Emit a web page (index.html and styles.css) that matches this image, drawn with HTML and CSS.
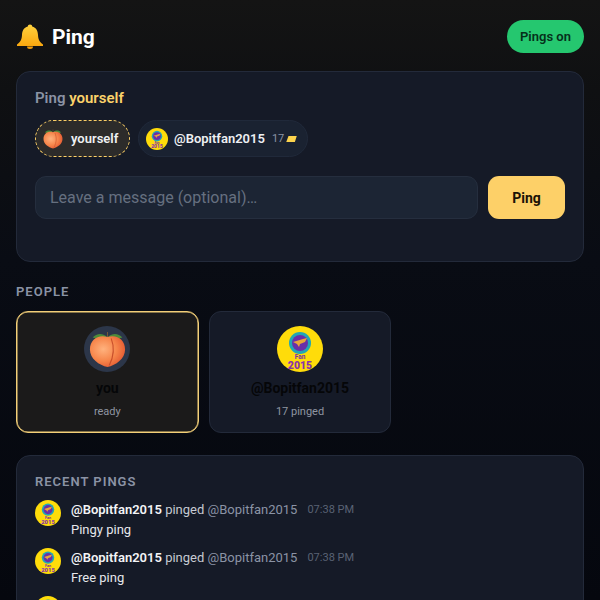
FILE: index.html
```html
<!DOCTYPE html>
<html lang="en">
<head>
<meta charset="utf-8">
<title>Ping</title>
<link rel="stylesheet" href="styles.css">
</head>
<body>
<svg class="defs" width="0" height="0" aria-hidden="true">
  <defs>
    <radialGradient id="peachFill" cx="38%" cy="42%" r="70%">
      <stop offset="0" stop-color="#ffb27e"/>
      <stop offset="0.55" stop-color="#f6854a"/>
      <stop offset="1" stop-color="#e0512e"/>
    </radialGradient>
    <linearGradient id="bellFill" x1="0" y1="0" x2="0" y2="1">
      <stop offset="0" stop-color="#ffd23f"/>
      <stop offset="1" stop-color="#f9a70f"/>
    </linearGradient>
    <symbol id="peach" viewBox="0 0 40 40">
      <path d="M19 6C15 2 8 2 4 7c5 2 10 2 15 0z" fill="#4d8a3a"/>
      <path d="M21 6c4-4 11-4 15 1-5 2-10 2-15 0z" fill="#4d8a3a"/>
      <path d="M19.500 1h1v6h-1z" fill="#7a5a3a"/>
      <path d="M20 6.500C10 3.500 1 9 1 20c0 10 10 17 19 19 9-2 19-9 19-19C39 9 30 3.500 20 6.500z" fill="url(#peachFill)"/>
      <path d="M24 8c3.500 9 3.500 18-2 29" fill="none" stroke="#c9502c" stroke-width="1.200"/>
    </symbol>
    <symbol id="fan" viewBox="0 0 46 46">
      <circle cx="23" cy="23" r="23" fill="#ffdc0a"/>
      <circle cx="23" cy="17" r="11" fill="#22a6b5"/>
      <circle cx="23" cy="17" r="8" fill="#6a2ea8"/>
      <path d="M16 16l10-3 4-1-2 4-5 2-1 3-2-3z" fill="#e9a53a"/>
      <text x="23" y="33" class="fan-small">Fan</text>
      <text x="23" y="42.500" class="fan-big">2015</text>
    </symbol>
  </defs>
</svg>

<header class="topbar">
  <h1 class="brand">
    <svg class="bell" viewBox="0 0 26 26" aria-hidden="true">
      <path d="M13 0.500c-1.300 0-2.200.9-2.200 2C6.800 3.500 5.200 6.800 5 11c-.2 4.500-1.500 7-5 9.500V22h26v-1.500C22.500 18 21.200 15.500 21 11c-.2-4.200-1.800-7.500-5.800-8.500 0-1.100-.9-2-2.200-2z" fill="url(#bellFill)"/>
      <path d="M10 22.500a3 2.500 0 0 0 6 0z" fill="#f29d0c"/>
    </svg>
    <span>Ping</span>
  </h1>
  <button class="toggle" type="button">Pings on</button>
</header>

<section class="card composer">
  <div class="composer-title">Ping <span class="accent">yourself</span></div>
  <div class="chips">
    <div class="chip chip-self">
      <svg class="chip-peach"><use href="#peach"/></svg>
      <span class="chip-name">yourself</span>
    </div>
    <div class="chip">
      <svg class="chip-avatar"><use href="#fan"/></svg>
      <span class="chip-name">@Bopitfan2015</span>
      <span class="chip-count">17<svg class="ticket" viewBox="0 0 14 8" aria-hidden="true"><path d="M3 0h11l-2.500 8H0z" fill="#fcd34d"/></svg></span>
    </div>
  </div>
  <div class="send-row">
    <input class="message" type="text" placeholder="Leave a message (optional)…">
    <button class="send" type="button">Ping</button>
  </div>
</section>

<h2 class="section-label">PEOPLE</h2>
<div class="people">
  <article class="person person-you">
    <div class="person-peach"><svg class="person-peach-svg"><use href="#peach"/></svg></div>
    <div class="person-name">you</div>
    <div class="person-sub">ready</div>
  </article>
  <article class="person">
    <svg class="person-avatar"><use href="#fan"/></svg>
    <div class="person-name">@Bopitfan2015</div>
    <div class="person-sub">17 pinged</div>
  </article>
</div>

<section class="card recent">
  <h2 class="recent-label">RECENT PINGS</h2>
  <div class="ping">
    <svg class="ping-avatar"><use href="#fan"/></svg>
    <div class="ping-body">
      <div class="ping-line"><b>@Bopitfan2015</b> pinged <span class="target">@Bopitfan2015</span><time>07:38 PM</time></div>
      <div class="ping-msg">Pingy ping</div>
    </div>
  </div>
  <div class="ping">
    <svg class="ping-avatar"><use href="#fan"/></svg>
    <div class="ping-body">
      <div class="ping-line"><b>@Bopitfan2015</b> pinged <span class="target">@Bopitfan2015</span><time>07:38 PM</time></div>
      <div class="ping-msg">Free ping</div>
    </div>
  </div>
  <div class="ping">
    <svg class="ping-avatar"><use href="#fan"/></svg>
  </div>
</section>
</body>
</html>
```
FILE: styles.css
```css
* { box-sizing: border-box; }
html, body { height: 600px; overflow: hidden; }
body {
  margin: 0;
  padding: 20px 16px 0;
  font-family: Roboto, "Liberation Sans", sans-serif;
  color: #e5e7eb;
  background: linear-gradient(180deg, #141414 0, #0f1012 90px, #090c14 260px, #05070e 600px);
}
.defs { position: absolute; }
.fan-small { font: 700 6.500px Roboto, sans-serif; fill: #7a2fa0; text-anchor: middle; }
.fan-big { font: 900 10.500px Roboto, sans-serif; fill: #8a35a8; text-anchor: middle; }

.topbar { display: flex; align-items: center; justify-content: space-between; height: 33px; }
.brand { display: flex; align-items: center; gap: 9px; margin: 0; font-size: 21px; font-weight: 700; color: #fff; }
.bell { width: 26px; height: 26px; margin-left: 1px; }
.toggle {
  width: 77px; height: 33px; padding: 0; border: 0; border-radius: 17px;
  background: #25c76f; color: #05301a;
  font: 600 13px Roboto, sans-serif;
}

.card { background: #151a27; border: 1px solid #232a3a; border-radius: 14px; }
.composer { height: 191px; margin-top: 18px; padding: 17px 18px 18px; }
.composer-title { font-size: 15px; line-height: 18px; font-weight: 600; color: #8b93a5; }
.accent { color: #fbd26a; }

.chips { display: flex; gap: 8px; margin-top: 13px; }
.chip {
  display: flex; align-items: center; height: 37px; padding: 0 10px 0 7px;
  border: 1px solid #20293a; border-radius: 19px; background: #1a2231;
}
.chip-self { width: 95px; padding-left: 7px; gap: 8px; background: #2c2b2a; border: 1.500px dashed #fcd067; }
.chip-peach { width: 20px; height: 20px; }
.chip-avatar { width: 22px; height: 22px; margin-right: 6px; }
.chip-name { font-size: 13px; font-weight: 600; color: #eef0f3; }
.chip-count { display: flex; align-items: center; margin-left: 7px; font-size: 11px; color: #8b93a5; }
.ticket { width: 11px; height: 6px; margin-left: 2px; }

.send-row { display: flex; gap: 10px; margin-top: 19px; }
.message {
  flex: 1; min-width: 0; height: 43px; padding: 0 14px;
  background: #1c2534; border: 1px solid #252e3e; border-radius: 11px;
  font: 400 16px Roboto, sans-serif; color: #e5e7eb;
}
.message::placeholder { color: #667080; opacity: 1; }
.send {
  width: 77px; height: 43px; border: 0; border-radius: 11px;
  background: #fdd068; color: #1a1206;
  font: 700 14px Roboto, sans-serif;
}

.section-label { margin: 22px 0 0; font-size: 13px; line-height: 16px; font-weight: 600; letter-spacing: 1px; color: #8b93a5; }
.people { display: grid; grid-template-columns: repeat(3, 1fr); gap: 10px; margin-top: 11px; }
.person {
  display: flex; flex-direction: column; align-items: center; height: 122px; padding-top: 14px;
  background: #151a27; border: 1px solid #232a3a; border-radius: 12px;
}
.person-you { background: #1b1a1a; border-color: #f3cf78; box-shadow: inset 0 0 0 0.500px #f3cf78; }
.person-peach { display: flex; align-items: center; justify-content: center; width: 46px; height: 46px; border-radius: 50%; background: #2c3649; }
.person-peach-svg { width: 37px; height: 37px; }
.person-avatar { width: 46px; height: 46px; }
.person-name { margin-top: 7px; font-size: 14px; line-height: 18px; font-weight: 700; color: #050608; }
.person-sub { margin-top: 8px; font-size: 11px; line-height: 14px; color: #8f95a1; }

.recent { margin-top: 22px; padding: 18px 18px 0; height: 200px; }
.recent-label { margin: 0; font-size: 13px; line-height: 16px; font-weight: 600; letter-spacing: 1px; color: #8b93a5; }
.ping { display: flex; gap: 10px; margin-top: 8px; height: 40px; }
.recent-label + .ping { margin-top: 10px; }
.ping-avatar { flex: none; width: 26px; height: 26px; }
.ping-line { font-size: 13px; line-height: 20px; color: #c6cad2; }
.ping-line b { font-weight: 600; color: #f3f4f6; }
.target { color: #8b93a5; }
time { margin-left: 10px; font-size: 11px; color: #596274; vertical-align: 1px; }
.ping-msg { font-size: 13px; line-height: 20px; color: #e5e7eb; }
```
